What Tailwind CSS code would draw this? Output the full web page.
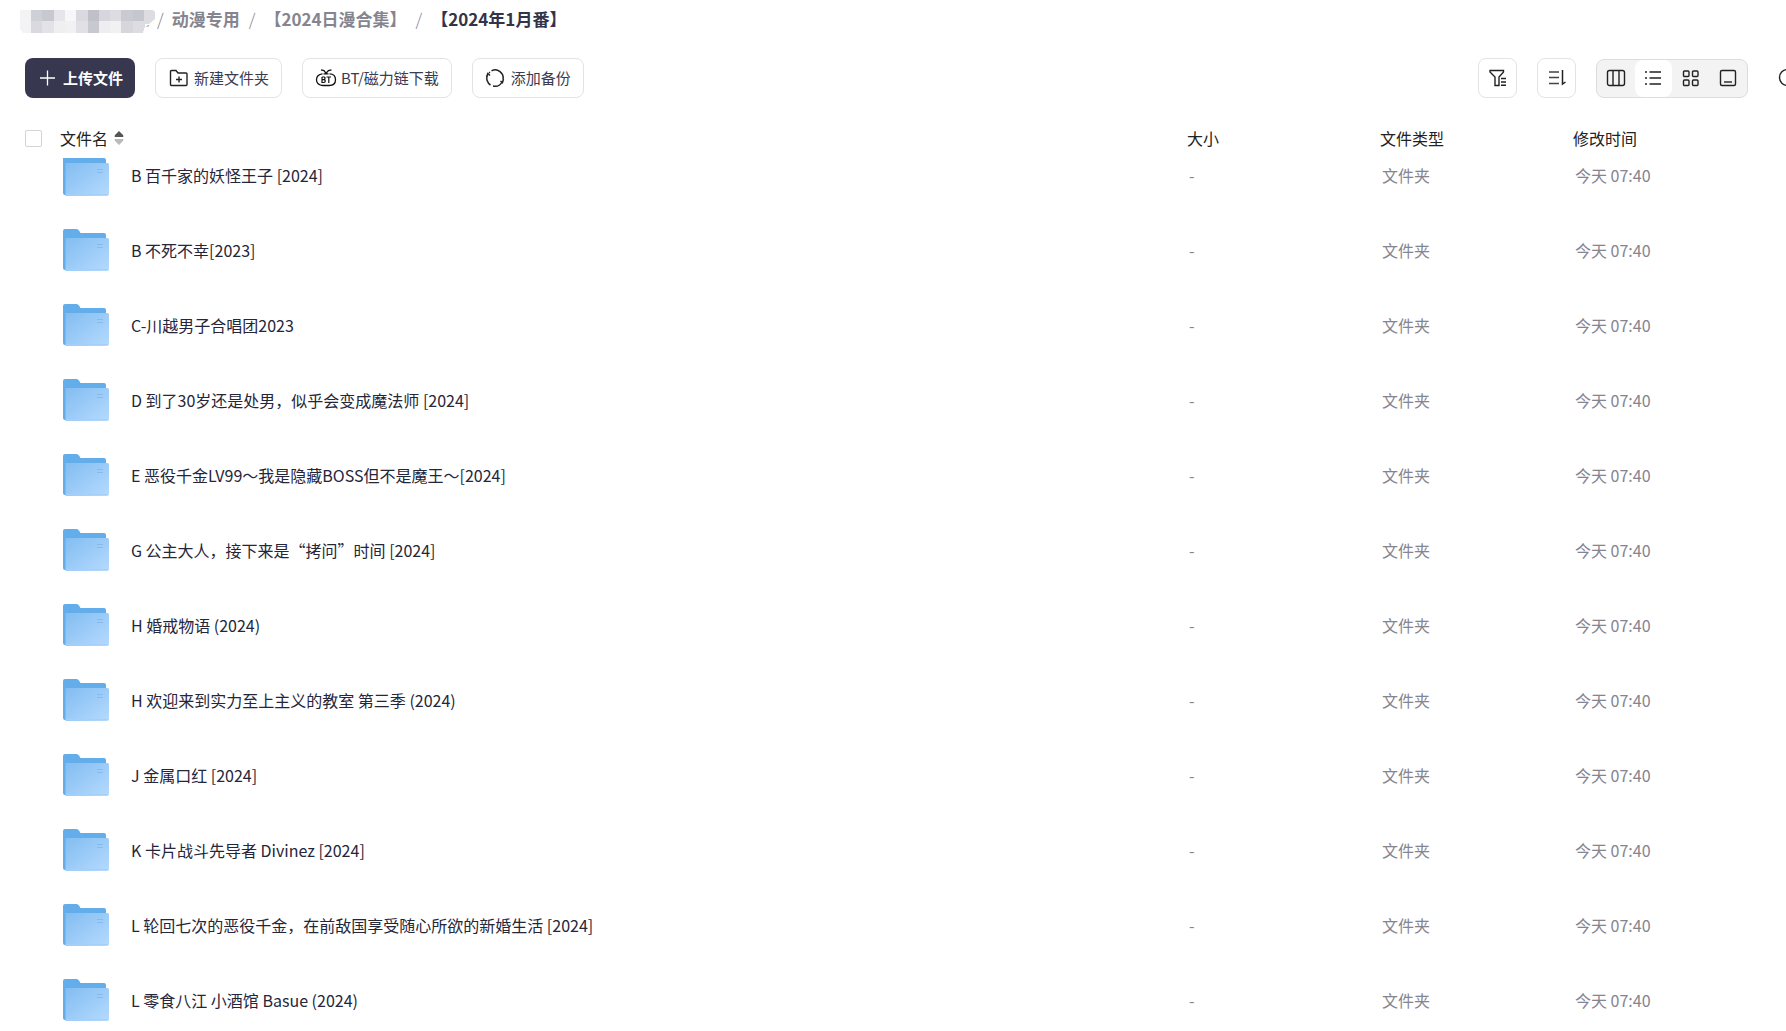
<!DOCTYPE html>
<html lang="zh-CN">
<head>
  <meta charset="UTF-8" />
  <meta name="viewport" content="width=device-width, initial-scale=1.0" />
  <title>【2024年1月番】</title>
  <script src="https://cdn.jsdelivr.net/npm/@tailwindcss/browser@4"></script>
</head>
<body class="flex h-screen flex-col overflow-hidden bg-white font-['Noto_Sans_CJK_SC',sans-serif] text-base text-[#25262f]">

  <!-- Shared folder icon -->
  <svg class="absolute size-0" aria-hidden="true">
    <defs>
      <linearGradient id="folderFront" x1="0" y1="0" x2="1" y2="1">
        <stop offset="0" stop-color="#82bdf1" />
        <stop offset="1" stop-color="#b5dafe" />
      </linearGradient>
    </defs>
    <symbol id="folder" viewBox="0 0 46 42">
      <path d="M0 2Q0 0 2 0H13.500Q15 0 16 1.500L17.500 4H41Q43 4 43 6V41H2Q0 41 0 39Z" fill="#62adea" />
      <path d="M2.500 9H44.500Q46 9 46 10.500V40Q46 42 44 42H2.500Z" fill="url(#folderFront)" />
      <path d="M3 40.500H45" stroke="#a3cff8" />
      <path d="M34 15.500H40M34 18.500H40" stroke="#84baf0" />
    </symbol>
  </svg>

  <!-- Breadcrumb -->
  <nav class="flex h-[38px] shrink-0 items-center pl-5 text-[17px] font-bold text-[#858590]" aria-label="路径">
    <svg class="h-7 w-[135px] shrink-0 self-end" viewBox="0 0 135 28" aria-hidden="true">
      <g shape-rendering="crispEdges">
        <path d="M0 0H11V23H3L0 20Z" fill="#f3f3f5" />
        <path d="M11 0H22V11H11Z" fill="#cfcfd6" /><path d="M11 11H22V23H11Z" fill="#d9d9df" />
        <path d="M22 0H34V11H22Z" fill="#c8c8d0" /><path d="M22 11H34V23H22Z" fill="#e3e3e7" />
        <path d="M34 0H45V11H34Z" fill="#e6e6ea" /><path d="M34 11H45V23H34Z" fill="#efeff2" />
        <path d="M45 0H56V11H45Z" fill="#f7f7f9" /><path d="M45 11H56V23H45Z" fill="#f1f1f4" />
        <path d="M56 0H68V11H56Z" fill="#d9d9df" /><path d="M56 11H68V23H56Z" fill="#e0e0e5" />
        <path d="M68 0H79V11H68Z" fill="#c0c0c9" /><path d="M68 11H79V23H68Z" fill="#c8c8d0" />
        <path d="M79 0H90V11H79Z" fill="#d6d6dc" /><path d="M79 11H90V23H79Z" fill="#eeeef1" />
        <path d="M90 0H101V11H90Z" fill="#dcdce1" /><path d="M90 11H101V23H90Z" fill="#f1f1f3" />
        <path d="M101 0H113V11H101Z" fill="#cacad2" /><path d="M101 11H113V23H101Z" fill="#d6d6dc" />
        <path d="M113 0H124V11H113Z" fill="#c6c6ce" /><path d="M113 11H125V17L123 23H113Z" fill="#dcdce1" />
      </g>
      <path d="M124 0H133L135 2V9L129 14H124Z" fill="#dcdce1" />
      <path d="M126.500 16.500L129 15.500" stroke="#999" />
    </svg>
    <span class="px-[2px] pr-2 font-light">/</span>
    <a href="#">动漫专用</a>
    <span class="px-[9px] font-light">/</span>
    <a href="#">【2024日漫合集】</a>
    <span class="px-[9px] font-light">/</span>
    <a href="#" class="text-[#33334a]">【2024年1月番】</a>
  </nav>

  <!-- Toolbar -->
  <div class="flex h-20 shrink-0 items-center gap-5 overflow-hidden pl-[25px] text-[15px] whitespace-nowrap text-[#3a3a50]">
    <button class="flex h-10 items-center gap-1.5 rounded-lg bg-[#37374f] px-3 font-bold text-white">
      <svg class="size-5" viewBox="0 0 20 20" fill="none" stroke="currentColor" stroke-width="1.3"><path d="M3 10H18M10.500 2.500V17.500" /></svg>
      上传文件
    </button>
    <button class="flex h-10 items-center gap-1 rounded-lg border border-[#e3e3e6] px-3">
      <svg class="size-[22px]" viewBox="0 0 22 22" fill="none" stroke="#222" stroke-width="1.4"><path d="M2.500 4.500Q2.500 3.500 3.500 3.500H8L10 6H18Q19 6 19 7V17.500Q19 18.500 18 18.500H3.500Q2.500 18.500 2.500 17.500ZM8 12.500H14M11 9.500V15.500" /></svg>
      新建文件夹
    </button>
    <button class="flex h-10 items-center gap-1 rounded-lg border border-[#e3e3e6] px-3">
      <svg class="size-[22px]" viewBox="0 0 22 22" fill="none" stroke="#111" stroke-width="1.3">
        <path d="M7.500 6.800Q1.500 7.500 1.500 12.700T8 18.500H14Q20.500 18.500 20.500 12.700T14.500 6.800M6 2.800L9 3.500L11 6.300L13.500 3.500L16.500 2.800M8.500 6.800H13.500" />
        <path d="M7 10V15.500H8.800Q10.300 15.500 10.300 14.100T8.800 12.700H7M8.800 12.700Q10 12.700 10 11.300T8.800 10H7M11.500 10H16M13.800 10V16" stroke-width="1.200" />
      </svg>
      BT/磁力链下载
    </button>
    <button class="flex h-10 items-center gap-1.5 rounded-lg border border-[#e3e3e6] px-3">
      <svg class="size-5" viewBox="0 0 20 20" fill="none" stroke="#222" stroke-width="1.5"><path d="M6.500 2.800A8 8 0 0 1 18 11.500M17 14A8 8 0 0 1 8 18M5.500 17A8 8 0 0 1 2.500 7M4 4.800L5 4M18.500 11L17.500 14.500L15.500 13M1.500 9L2.800 5.500L5 7.500" /></svg>
      添加备份
    </button>

    <div class="ml-auto flex shrink-0 items-center gap-5 text-[#222]">
      <button class="flex h-10 w-[39px] items-center justify-center rounded-lg border border-[#e3e3e6]" aria-label="筛选">
        <svg class="size-5" viewBox="0 0 20 20" fill="none" stroke="currentColor" stroke-width="1.4"><path d="M2 2.500H15.500V4L11 9V17.500H7V9L2 4ZM13 10.500H18M13 14H18M13 17.300H18" /></svg>
      </button>
      <button class="flex h-10 w-[39px] items-center justify-center rounded-lg border border-[#e3e3e6]" aria-label="排序">
        <svg class="size-5" viewBox="0 0 20 20" fill="none" stroke="currentColor" stroke-width="1.5"><path d="M2 4H12M2 9.500H12M2 15.500H12" stroke="#444" /><path d="M15.500 2V16L18.500 14" /></svg>
      </button>
      <div class="flex h-[39px] w-[152px] rounded-lg border border-[#dddde0] bg-[#f3f3f4]">
        <button class="flex flex-1 items-center justify-center" aria-label="分栏">
          <svg class="size-5" viewBox="0 0 20 20" fill="none" stroke="currentColor" stroke-width="1.4"><rect x="1.500" y="2.500" width="17" height="15" rx="2" /><path d="M7 2.500V17.500M13 2.500V17.500" /></svg>
        </button>
        <button class="flex flex-1 items-center justify-center rounded-lg bg-white" aria-label="列表">
          <svg class="size-5" viewBox="0 0 20 20" fill="none" stroke="currentColor" stroke-width="1.5"><path d="M6.500 4H18M6.500 10H18M6.500 16H18M2 4H4M2 10H4M2 16H4" /></svg>
        </button>
        <button class="flex flex-1 items-center justify-center" aria-label="网格">
          <svg class="size-5" viewBox="0 0 20 20" fill="none" stroke="currentColor" stroke-width="1.4"><rect x="2.500" y="3" width="5.500" height="5.500" rx="1" /><rect x="11.500" y="3" width="5.500" height="5.500" rx="1" /><rect x="2.500" y="12" width="5.500" height="5.500" rx="1" /><rect x="11.500" y="12" width="5.500" height="5.500" rx="1" /></svg>
        </button>
        <button class="flex flex-1 items-center justify-center" aria-label="大图">
          <svg class="size-5" viewBox="0 0 20 20" fill="none" stroke="currentColor" stroke-width="1.4"><rect x="2.500" y="2.500" width="15" height="15" rx="1.500" /><path d="M6 14H14" /></svg>
        </button>
      </div>
      <button class="-mr-3 ml-2.5" aria-label="搜索">
        <svg class="size-5" viewBox="0 0 20 20" fill="none" stroke="currentColor" stroke-width="1.4"><circle cx="9.500" cy="9.500" r="8" /><path d="M15 15L19 19" /></svg>
      </button>
    </div>
  </div>

  <!-- File list, first row partly under the header -->
  <div class="min-h-0 flex-1 overflow-hidden">
    <table class="w-full table-fixed">
      <thead class="relative z-10 bg-white text-[#222]">
        <tr class="h-10 text-left">
          <th class="w-[60px] p-0 pl-[25px]">
            <input type="checkbox" aria-label="全选" class="block size-[17px] appearance-none rounded-xs border border-[#d4d4d8] bg-white" />
          </th>
          <th class="p-0 font-normal">
            <button class="flex items-center gap-1.5">
              文件名
              <svg class="h-3.5 w-2.5" viewBox="0 0 10 14" aria-hidden="true"><path d="M1 6Q0 5.500 1 4L5 0L9 4Q10 5.500 9 6Z" fill="#555" /><path d="M1 8Q0 8.500 1 10L5 14L9 10Q10 8.500 9 8Z" fill="#bbb" /></svg>
            </button>
          </th>
          <th class="w-[193px] p-0 font-normal">大小</th>
          <th class="w-[193px] p-0 font-normal">文件类型</th>
          <th class="w-[213px] p-0 font-normal">修改时间</th>
        </tr>
      </thead>
      <tbody id="fileRows" class="-translate-y-[21px]"></tbody>
    </table>
  </div>

  <script>
    const folders = [
      'B 百千家的妖怪王子 [2024]',
      'B 不死不幸[2023]',
      'C-川越男子合唱团2023',
      'D 到了30岁还是处男，似乎会变成魔法师 [2024]',
      'E 恶役千金LV99～我是隐藏BOSS但不是魔王～[2024]',
      'G 公主大人，接下来是“拷问”时间 [2024]',
      'H 婚戒物语 (2024)',
      'H 欢迎来到实力至上主义的教室 第三季 (2024)',
      'J 金属口红 [2024]',
      'K 卡片战斗先导者 Divinez [2024]',
      'L 轮回七次的恶役千金，在前敌国享受随心所欲的新婚生活 [2024]',
      'L 零食八江 小酒馆 Basue (2024)'
    ];

    document.getElementById('fileRows').innerHTML = folders.map(name => `
      <tr class="h-[75px] text-[#858590]">
        <td class="p-0"></td>
        <td class="p-0">
          <a href="#" class="flex items-center gap-[22px] pl-[3px] text-[#25263a]">
            <svg class="h-[42px] w-[46px] shrink-0" aria-hidden="true"><use href="#folder" /></svg>
            <span class="truncate">${name}</span>
          </a>
        </td>
        <td class="p-0 pl-0.5">-</td>
        <td class="p-0 pl-0.5">文件夹</td>
        <td class="p-0 pl-0.5">今天 07:40</td>
      </tr>`).join('');
  </script>
</body>
</html>
